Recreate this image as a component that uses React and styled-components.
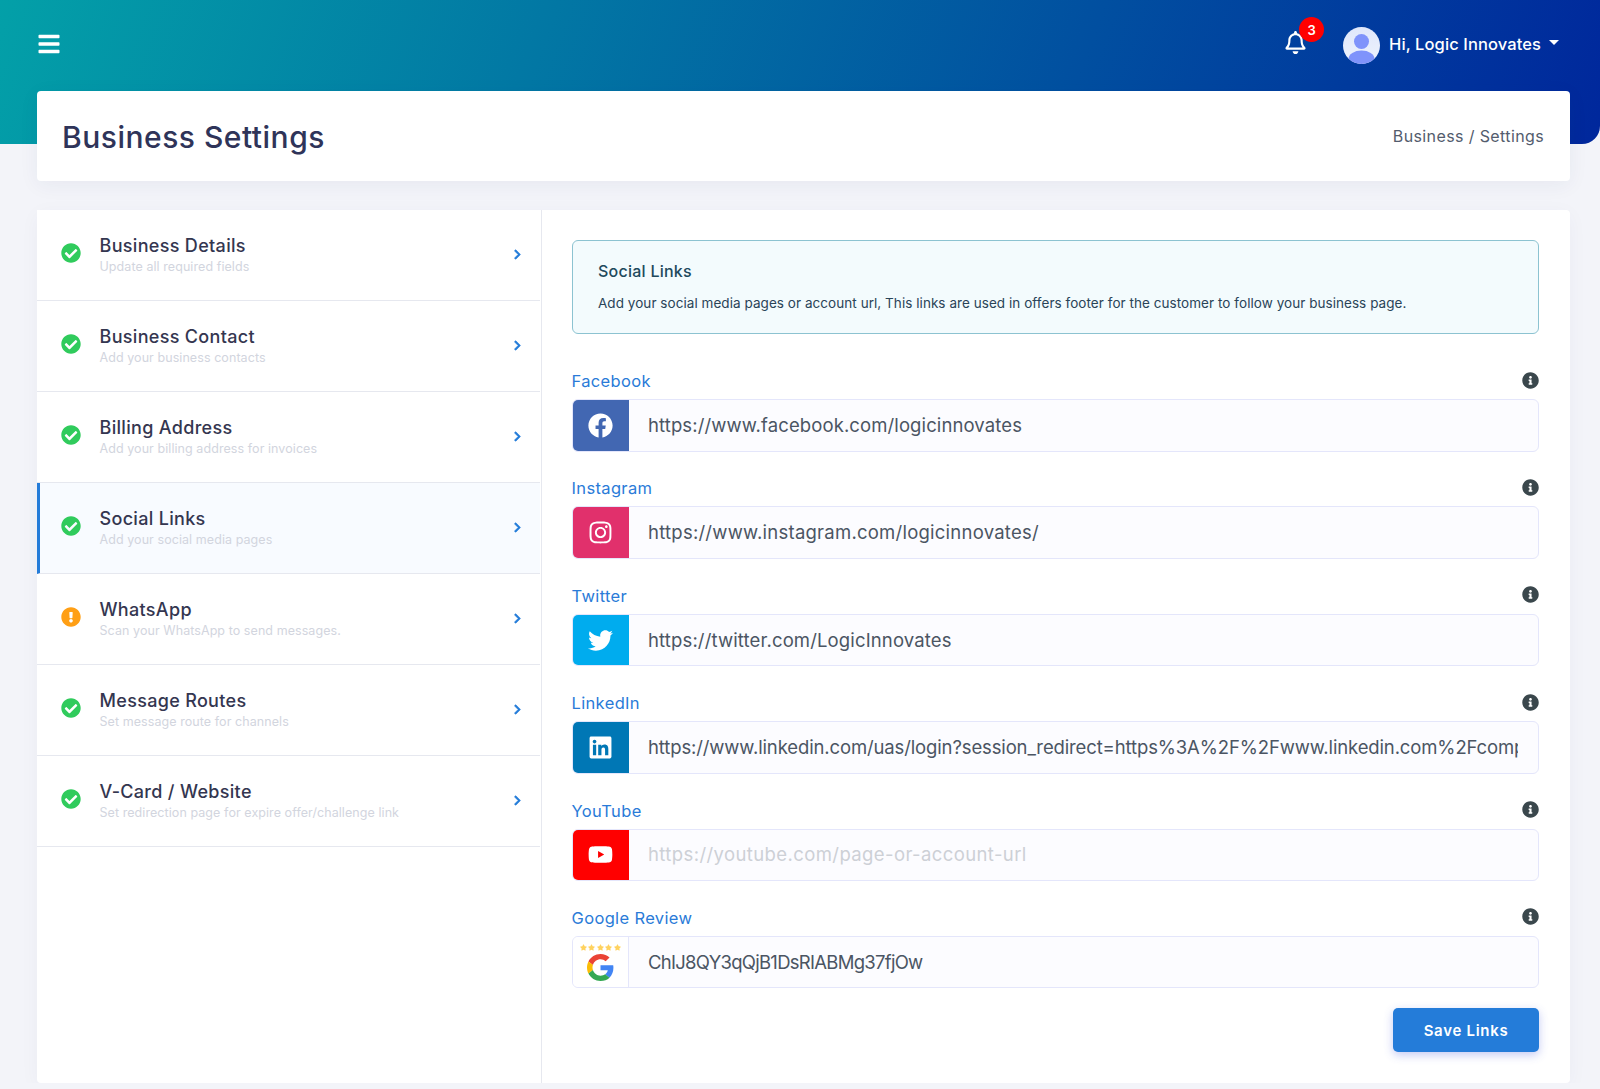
import React from "react"
import styled, { createGlobalStyle } from "styled-components"
import {
  FaBars,
  FaRegBell,
  FaCheckCircle,
  FaExclamationCircle,
  FaChevronRight,
  FaInfoCircle,
  FaFacebook,
  FaInstagram,
  FaTwitter,
  FaLinkedin,
  FaYoutube,
  FaStar,
} from "react-icons/fa"

const GlobalStyle = createGlobalStyle`
  html, body {
    margin: 0;
    padding: 0;
    background: #f3f4f9;
    font-family: Inter, "Liberation Sans", sans-serif;
    overflow: hidden;
  }
  * { box-sizing: border-box; }
`

const Hero = styled.div`
  height: 144px;
  background: linear-gradient(110deg, #03a0a8, #00279c);
  border-bottom-right-radius: 18px;
`

const TopBar = styled.header`
  height: 91px;
  display: flex;
  align-items: center;
  color: #fff;
  padding: 0 41px 4px 37px;
`

const Burger = styled.div`
  display: flex;
  font-size: 24px;
  margin-right: auto;
`

const BellWrap = styled.div`
  position: relative;
  display: flex;
  font-size: 23px;
  margin: -2px 36px 0 0;
`

const Badge = styled.span`
  position: absolute;
  top: -14px;
  left: 15px;
  width: 25px;
  height: 25px;
  border-radius: 50%;
  background: #ff0000;
  color: #fff;
  font-size: 13px;
  font-weight: 600;
  display: flex;
  align-items: center;
  justify-content: center;
`

const AvatarWrap = styled.div`
  display: flex;
  margin-top: 4px;
`

const UserName = styled.span`
  font-size: 16.5px;
  font-weight: 500;
  letter-spacing: 0.1px;
  margin-left: 9px;
`

const Caret = styled.span`
  width: 0;
  height: 0;
  margin-left: 8px;
  margin-top: -2px;
  border-left: 5px solid transparent;
  border-right: 5px solid transparent;
  border-top: 5px solid #fff;
`

const Main = styled.main`
  margin-top: -53px;
  padding: 0 30px 0 37px;
  position: relative;
`

const TitleCard = styled.section`
  height: 90px;
  background: #fff;
  border-radius: 4px;
  box-shadow: 0 4px 20px rgba(40, 50, 110, 0.06);
  display: flex;
  align-items: center;
  justify-content: space-between;
  padding: 0 26px 0 25px;
  margin-bottom: 29px;
`

const PageTitle = styled.h1`
  margin: 2px 0 0;
  font-size: 30px;
  font-weight: 500;
  color: #2f3459;
  letter-spacing: 0.5px;
`

const Crumbs = styled.div`
  font-size: 16px;
  letter-spacing: 0.38px;
  color: #535c6d;
`

const Panel = styled.section`
  display: grid;
  grid-template-columns: 505px 1fr;
  height: 873px;
  background: #fff;
  border-radius: 4px;
  box-shadow: 0 4px 20px rgba(40, 50, 110, 0.04);
`

const SideNav = styled.nav`
  border-right: 1px solid #e6e8ef;
  padding-right: 1px;
`

const NavRow = styled.div`
  height: 91px;
  display: flex;
  align-items: center;
  padding: 0 17px 0 ${(p) => (p.$active ? "21px" : "24px")};
  border-bottom: 1px solid #e6e8ef;
  border-left: ${(p) => (p.$active ? "3px solid #247cd9" : "0")};
  background: ${(p) => (p.$active ? "#f8fbff" : "#fff")};
`

const StatusIcon = styled.span`
  display: flex;
  font-size: 20px;
  width: 38.5px;
  flex: none;
  margin-top: -5px;
  color: ${(p) => (p.$warn ? "#ff9f15" : "#30cb5c")};
`

const NavText = styled.div`
  flex: 1;
  margin-top: -2px;
`

const NavTitle = styled.div`
  font-size: 18px;
  font-weight: 500;
  line-height: 26px;
  letter-spacing: 0.32px;
  color: #343650;
`

const NavSub = styled.div`
  font-size: 12.5px;
  line-height: 16px;
  letter-spacing: 0.07px;
  color: #d2d5de;
`

const Chevron = styled.span`
  display: flex;
  font-size: 11px;
  margin-top: -2px;
  color: #247cd9;

  svg {
    stroke: currentColor;
    stroke-width: 30;
  }
`

const Content = styled.div`
  padding: 30px 31px 30px 30px;
`

const Alert = styled.div`
  height: 94px;
  background: #f3fbfd;
  border: 1px solid #8cc3d1;
  border-radius: 6px;
  padding: 18px 25px;
  margin-bottom: 32px;
  color: #20495c;
`

const AlertTitle = styled.div`
  font-size: 16px;
  font-weight: 500;
  line-height: 24px;
  letter-spacing: 0.25px;
`

const AlertText = styled.div`
  font-size: 13.5px;
  line-height: 20px;
  letter-spacing: 0.05px;
  margin-top: 10px;
  color: #2a4458;
`

const Field = styled.div`
  margin-bottom: 21.9px;
`

const LabelRow = styled.div`
  height: 30px;
  margin-bottom: 3px;
  display: flex;
  align-items: center;
  justify-content: space-between;
`

const Label = styled.label`
  font-size: 16.5px;
  letter-spacing: 0.35px;
  margin-left: -0.5px;
  color: #2a7bd8;
`

const InfoIcon = styled.span`
  display: flex;
  font-size: 17px;
  color: #3a474c;
  margin-top: -2px;
`

const InputGroup = styled.div`
  height: 52.5px;
  display: flex;
  border: 1px solid #e4e6fb;
  border-radius: 6px;
  background: #fcfcff;
  overflow: hidden;
`

const Addon = styled.div`
  width: 55.5px;
  flex: none;
  display: flex;
  align-items: center;
  justify-content: center;
  font-size: 25px;
  color: #fff;
  background: ${(p) => p.$bg || "#fff"};
  border-right: ${(p) => (p.$bg ? "0" : "1px solid #e4e6fb")};
`

const UrlInput = styled.input`
  flex: 1;
  min-width: 0;
  border: 0;
  outline: 0;
  background: transparent;
  padding: 0 20px 1px 19.5px;
  font-family: inherit;
  font-size: 18.5px;
  letter-spacing: ${(p) => p.$spacing}px;
  color: #4b5563;

  &::placeholder {
    color: #cdd0d6;
    opacity: 1;
  }
`

const GoogleMark = styled.div`
  display: flex;
  flex-direction: column;
  align-items: center;
  gap: 3px;
`

const Stars = styled.div`
  display: flex;
  gap: 1.5px;
  font-size: 7px;
  color: #ffd25e;
`

const Actions = styled.div`
  display: flex;
  justify-content: flex-end;
  margin-top: -1.9px;
`

const SaveButton = styled.button`
  width: 146px;
  height: 44px;
  border: 0;
  border-radius: 5px;
  background: #247cd9;
  color: #fff;
  font-family: inherit;
  font-size: 15px;
  font-weight: 600;
  letter-spacing: 0.7px;
  box-shadow: 0 3px 10px rgba(60, 80, 220, 0.3);
`

const steps = [
  { title: "Business Details", sub: "Update all required fields" },
  { title: "Business Contact", sub: "Add your business contacts" },
  { title: "Billing Address", sub: "Add your billing address for invoices" },
  { title: "Social Links", sub: "Add your social media pages", active: true },
  { title: "WhatsApp", sub: "Scan your WhatsApp to send messages.", warn: true },
  { title: "Message Routes", sub: "Set message route for channels" },
  { title: "V-Card / Website", sub: "Set redirection page for expire offer/challenge link" },
]

const links = [
  { label: "Facebook", bg: "#4267b2", icon: <FaFacebook />, spacing: 0.11, value: "https://www.facebook.com/logicinnovates" },
  { label: "Instagram", bg: "#e1306c", icon: <FaInstagram />, spacing: 0.24, value: "https://www.instagram.com/logicinnovates/" },
  { label: "Twitter", bg: "#00acee", icon: <FaTwitter />, spacing: 0.14, value: "https://twitter.com/LogicInnovates" },
  {
    label: "LinkedIn",
    bg: "#0077b5",
    icon: <FaLinkedin />,
    spacing: -0.13,
    value: "https://www.linkedin.com/uas/login?session_redirect=https%3A%2F%2Fwww.linkedin.com%2Fcompany%2Flogicinnovates",
  },
  { label: "YouTube", bg: "#ff0000", icon: <FaYoutube />, spacing: 0.4, placeholder: "https://youtube.com/page-or-account-url" },
]

const Avatar = () => (
  <AvatarWrap>
    <svg width="37" height="37" viewBox="0 0 37 37">
      <defs>
        <linearGradient id="avatarBg" x1="0" y1="0" x2="0" y2="1">
          <stop offset="0" stopColor="#dfe7fb" />
          <stop offset="1" stopColor="#eef3fd" />
        </linearGradient>
        <clipPath id="avatarClip">
          <circle cx="18.5" cy="18.5" r="18.5" />
        </clipPath>
      </defs>
      <g clipPath="url(#avatarClip)">
        <rect width="37" height="37" fill="url(#avatarBg)" />
        <circle cx="18.5" cy="14.5" r="7.5" fill="#7f93fb" />
        <ellipse cx="18.5" cy="32" rx="13" ry="8.5" fill="#7f93fb" />
      </g>
    </svg>
  </AvatarWrap>
)

const GoogleReview = () => (
  <GoogleMark>
    <Stars>
      <FaStar />
      <FaStar />
      <FaStar />
      <FaStar />
      <FaStar />
    </Stars>
    <svg width="27" height="27" viewBox="0 0 48 48">
      <path fill="#EA4335" d="M24 9.5c3.54 0 6.71 1.22 9.21 3.6l6.85-6.85C35.9 2.38 30.47 0 24 0 14.62 0 6.51 5.38 2.56 13.22l7.98 6.19C12.43 13.72 17.74 9.5 24 9.5z" />
      <path fill="#4285F4" d="M46.98 24.55c0-1.57-.15-3.09-.38-4.55H24v9.02h12.94c-.58 2.96-2.26 5.48-4.78 7.18l7.73 6c4.51-4.18 7.09-10.36 7.09-17.65z" />
      <path fill="#FBBC05" d="M10.53 28.59c-.48-1.45-.76-2.99-.76-4.59s.27-3.14.76-4.59l-7.98-6.19C.92 16.46 0 20.12 0 24c0 3.88.92 7.54 2.56 10.78l7.97-6.19z" />
      <path fill="#34A853" d="M24 48c6.48 0 11.93-2.13 16.09-5.81l-7.73-6c-2.15 1.45-4.92 2.3-8.36 2.3-6.26 0-11.57-4.22-13.47-9.91l-7.98 6.19C6.51 42.62 14.62 48 24 48z" />
    </svg>
  </GoogleMark>
)

const LinkField = ({ label, addon, bg, value, placeholder, spacing }) => (
  <Field>
    <LabelRow>
      <Label>{label}</Label>
      <InfoIcon>
        <FaInfoCircle />
      </InfoIcon>
    </LabelRow>
    <InputGroup>
      <Addon $bg={bg}>{addon}</Addon>
      <UrlInput $spacing={spacing} defaultValue={value} placeholder={placeholder} />
    </InputGroup>
  </Field>
)

export default function App() {
  return (
    <>
      <GlobalStyle />
      <Hero>
        <TopBar>
          <Burger>
            <FaBars />
          </Burger>
          <BellWrap>
            <FaRegBell />
            <Badge>3</Badge>
          </BellWrap>
          <Avatar />
          <UserName>Hi, Logic Innovates</UserName>
          <Caret />
        </TopBar>
      </Hero>
      <Main>
        <TitleCard>
          <PageTitle>Business Settings</PageTitle>
          <Crumbs>Business / Settings</Crumbs>
        </TitleCard>
        <Panel>
          <SideNav>
            {steps.map((s) => (
              <NavRow key={s.title} $active={s.active}>
                <StatusIcon $warn={s.warn}>{s.warn ? <FaExclamationCircle /> : <FaCheckCircle />}</StatusIcon>
                <NavText>
                  <NavTitle>{s.title}</NavTitle>
                  <NavSub>{s.sub}</NavSub>
                </NavText>
                <Chevron>
                  <FaChevronRight />
                </Chevron>
              </NavRow>
            ))}
          </SideNav>
          <Content>
            <Alert>
              <AlertTitle>Social Links</AlertTitle>
              <AlertText>
                Add your social media pages or account url, This links are used in offers footer for the customer to follow your business page.
              </AlertText>
            </Alert>
            {links.map((l) => (
              <LinkField key={l.label} label={l.label} addon={l.icon} bg={l.bg} value={l.value} placeholder={l.placeholder} spacing={l.spacing} />
            ))}
            <LinkField label="Google Review" addon={<GoogleReview />} spacing={-0.72} value="ChIJ8QY3qQjB1DsRIABMg37fjOw" />
            <Actions>
              <SaveButton>Save Links</SaveButton>
            </Actions>
          </Content>
        </Panel>
      </Main>
    </>
  )
}
